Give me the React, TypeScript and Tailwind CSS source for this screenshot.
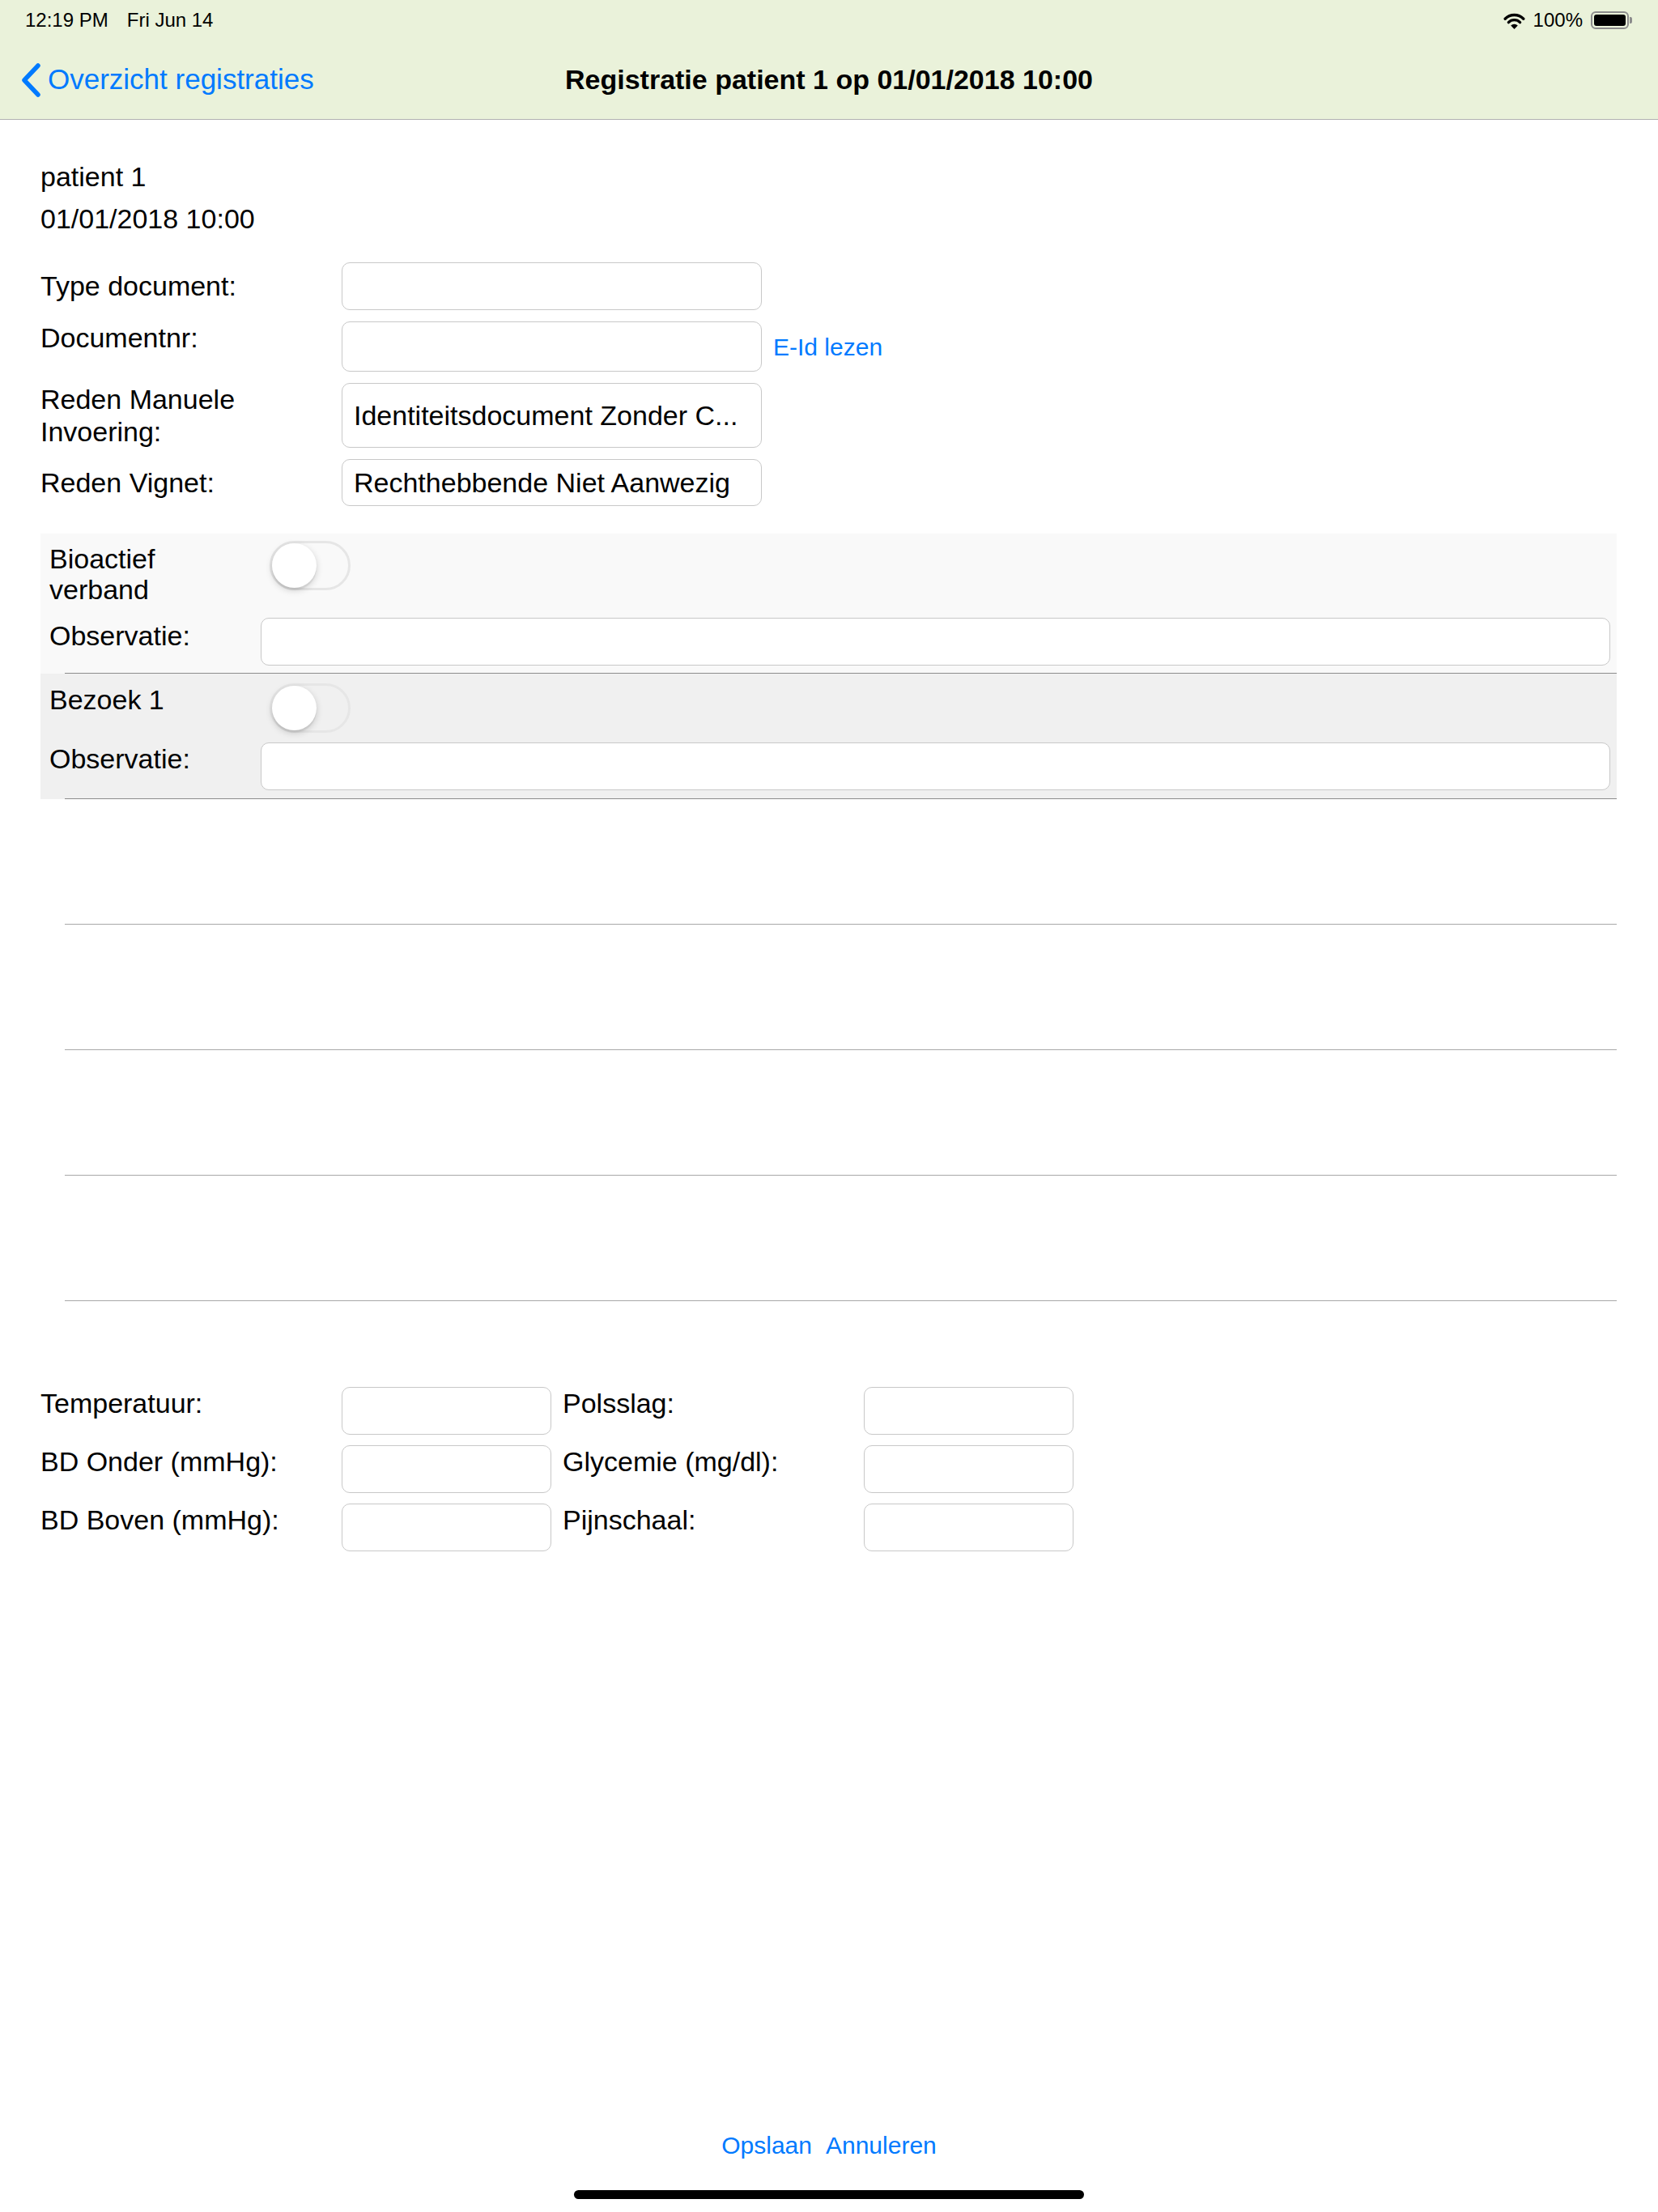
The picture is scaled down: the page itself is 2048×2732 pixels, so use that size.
import React from 'react'

// iPad registration form (2x scale, 2048x2732)

function WifiIcon(): JSX.Element {
  return (
    <svg width="27" height="21" viewBox="0 0 27 21" fill="none">
      <path d="M2.2 8.2 A16 16 0 0 1 24.8 8.2" stroke="#000" strokeWidth="3.4" strokeLinecap="round" />
      <path d="M6.4 12.6 A10 10 0 0 1 20.6 12.6" stroke="#000" strokeWidth="3.4" strokeLinecap="round" />
      <path d="M13.5 21 L9.2 16.6 A6 6 0 0 1 17.8 16.6 Z" fill="#000" />
    </svg>
  )
}

function BatteryIcon(): JSX.Element {
  return (
    <div className="flex items-center">
      <div className="flex h-[22px] w-[47px] items-stretch rounded-[6px] border-2 border-[#8c8c8c] p-[2px]">
        <div className="flex-1 rounded-[3px] bg-black" />
      </div>
      <div className="ml-[1px] h-[8px] w-[3px] rounded-r-[2px] bg-[#8c8c8c]" />
    </div>
  )
}

function Toggle(): JSX.Element {
  return (
    <div className="flex h-[61px] w-[100px] shrink-0 items-center rounded-full border-[3px] border-[#e6e6e6]">
      <div className="h-[55px] w-[55px] rounded-full bg-white shadow-[0_3px_8px_rgba(0,0,0,0.18),0_3px_1px_rgba(0,0,0,0.06)]" />
    </div>
  )
}

function Field({ h, value, className }: { h: string; value?: string; className?: string }): JSX.Element {
  return (
    <div
      className={`flex items-center overflow-hidden whitespace-nowrap rounded-[10px] border border-[#c8c8c8] bg-white pl-[14px] ${h} ${className ?? ''}`}
    >
      {value}
    </div>
  )
}

function VitalRow({ a, b }: { a: string; b: string }): JSX.Element {
  return (
    <div className="flex items-start">
      <div className="w-[372px] leading-[41px]">{a}</div>
      <Field h="h-[59px]" className="w-[259px]" />
      <div className="ml-[14px] w-[372px] leading-[41px]">{b}</div>
      <Field h="h-[59px]" className="w-[259px]" />
    </div>
  )
}

export default function App(): JSX.Element {
  return (
    <div className="flex h-[2732px] w-[2048px] flex-col bg-white text-[34px] text-black font-['Liberation_Sans',Arial,sans-serif]">
      {/* status + nav bar */}
      <div className="h-[148px] border-b border-[#b2b2b2] bg-[#eaf2da]">
        <div className="flex h-[50px] items-center justify-between pl-[31px] pr-[32px] text-[24px]">
          <div className="flex gap-[23px]">
            <span>12:19 PM</span>
            <span>Fri Jun 14</span>
          </div>
          <div className="flex items-center gap-[10px]">
            <WifiIcon />
            <span>100%</span>
            <BatteryIcon />
          </div>
        </div>
        <div className="grid h-[97px] grid-cols-[1fr_auto_1fr] items-center">
          <div className="flex items-center pl-[25px] text-[35px] text-[#007aff]">
            <svg width="26" height="42" viewBox="0 0 26 42" fill="none">
              <path d="M22 3 L5 21 L22 39" stroke="#007aff" strokeWidth="5.5" strokeLinecap="round" strokeLinejoin="round" />
            </svg>
            <span className="ml-[8px]">Overzicht registraties</span>
          </div>
          <div className="font-bold">Registratie patient 1 op 01/01/2018 10:00</div>
          <div />
        </div>
      </div>

      {/* content */}
      <div className="pl-[50px] pr-[51px]">
        <div className="pt-[44px] leading-[52px]">
          <div>patient 1</div>
          <div>01/01/2018 10:00</div>
        </div>

        <div className="mt-[28px] flex flex-col gap-[14px]">
          <div className="flex items-center">
            <div className="w-[372px] leading-[41px]">Type document:</div>
            <Field h="h-[59px]" className="w-[519px]" />
          </div>
          <div className="flex items-start">
            <div className="w-[372px] leading-[41px]">Documentnr:</div>
            <Field h="h-[62px]" className="w-[519px]" />
            <button className="ml-[14px] self-center text-[30px] text-[#007aff]">E-Id lezen</button>
          </div>
          <div className="flex items-center">
            <div className="w-[372px] leading-[40px]">
              Reden Manuele
              <br />
              Invoering:
            </div>
            <Field h="h-[80px]" className="w-[519px]" value="Identiteitsdocument Zonder C..." />
          </div>
          <div className="flex items-center">
            <div className="w-[372px] leading-[41px]">Reden Vignet:</div>
            <Field h="h-[58px]" className="w-[519px]" value="Rechthebbende Niet Aanwezig" />
          </div>
        </div>

        {/* toggle sections */}
        <div className="mt-[34px] bg-[#f9f9f9]">
          <div className="pl-[11px] pr-[8px] pt-[9px] pb-[9px]">
            <div className="flex items-start">
              <div className="w-[272px] pt-[3px] leading-[38px]">
                Bioactief
                <br />
                verband
              </div>
              <Toggle />
            </div>
            <div className="mt-[16px] flex items-start">
              <div className="w-[261px] pt-[2px] leading-[41px]">Observatie:</div>
              <Field h="h-[59px]" className="flex-1" />
            </div>
          </div>
          <div className="ml-[30px] h-px bg-[#8c8c8c]" />
        </div>
        <div className="bg-[#f0f0f0]">
          <div className="pl-[11px] pr-[8px] pt-[12px] pb-[10px]">
            <div className="flex items-start">
              <div className="w-[272px] leading-[41px]">Bezoek 1</div>
              <Toggle />
            </div>
            <div className="mt-[12px] flex items-start">
              <div className="w-[261px] leading-[41px]">Observatie:</div>
              <Field h="h-[59px]" className="flex-1" />
            </div>
          </div>
          <div className="ml-[30px] h-px bg-[#8c8c8c]" />
        </div>

        {/* empty rows */}
        {[0, 1, 2, 3].map((i) => (
          <div key={i} className="ml-[30px] h-[155px] border-b border-[#a8a8a8]" />
        ))}

        {/* vitals */}
        <div className="mt-[106px] flex flex-col gap-[13px]">
          <VitalRow a="Temperatuur:" b="Polsslag:" />
          <VitalRow a="BD Onder (mmHg):" b="Glycemie (mg/dl):" />
          <VitalRow a="BD Boven (mmHg):" b="Pijnschaal:" />
        </div>
      </div>

      {/* footer */}
      <div className="mt-auto flex flex-col items-center pb-[16px]">
        <div className="flex gap-[17px] text-[30px] leading-[41px] text-[#007aff]">
          <button>Opslaan</button>
          <button>Annuleren</button>
        </div>
        <div className="mt-[35px] h-[11px] w-[630px] rounded-full bg-black" />
      </div>
    </div>
  )
}
